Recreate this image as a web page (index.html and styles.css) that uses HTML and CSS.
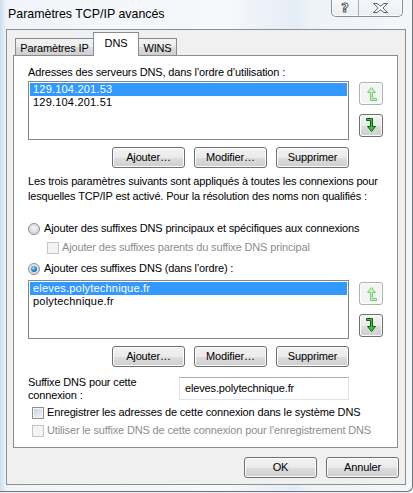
FILE: index.html
```html
<!DOCTYPE html>
<html lang="fr">
<head>
<meta charset="utf-8">
<title>Paramètres TCP/IP avancés</title>
<link rel="stylesheet" href="styles.css">
</head>
<body>
<div class="frame">
  <div class="titlebar">
    <span class="title">Paramètres TCP/IP avancés</span>
    <div class="caption-btns">
      <div class="cbtn help"><span class="qmark">?</span></div>
      <div class="cbtn close">
        <svg width="15" height="10" viewBox="0 0 15 10"><path d="M0.5 0.5 H4 L7.5 3.2 L11 0.5 H14.5 L9.8 5 L14.5 9.5 H11 L7.5 6.8 L4 9.5 H0.5 L5.2 5 Z" fill="#fff" stroke="#5c5c5c" stroke-width="1" stroke-linejoin="round"/></svg>
      </div>
    </div>
  </div>
  <div class="client">
    <div class="tabs">
      <div class="tab t1">Paramètres IP</div>
      <div class="tab t2 active">DNS</div>
      <div class="tab t3">WINS</div>
    </div>
    <div class="panel">
      <div class="lbl first">Adresses des serveurs DNS, dans l’ordre d’utilisation :</div>
      <div class="listrow">
        <div class="listbox">
          <div class="item sel">129.104.201.53</div>
          <div class="item">129.104.201.51</div>
        </div>
        <div class="arrows">
          <div class="abtn disabled">
            <svg width="11" height="15" viewBox="0 0 11 15"><path d="M0.5 0.5 H6.5 V8.5 H9.5 L5.5 13.5 L1.5 8.5 H4.5 V2.5 H0.5 Z" transform="rotate(180 5.5 7.5)" fill="#c4f0c4" stroke="#76cf76" stroke-width="1" stroke-linejoin="round"/></svg>
          </div>
          <div class="abtn">
            <svg width="11" height="15" viewBox="0 0 11 15"><path d="M0.5 0.5 H6.5 V8.5 H9.5 L5.5 13.5 L1.5 8.5 H4.5 V2.5 H0.5 Z" fill="#33cc33" stroke="#145c14" stroke-width="1" stroke-linejoin="round"/></svg>
          </div>
        </div>
      </div>
      <div class="btnrow">
        <div class="btn">Ajouter…</div>
        <div class="btn">Modifier…</div>
        <div class="btn">Supprimer</div>
      </div>
      <p class="para">Les trois paramètres suivants sont appliqués à toutes les connexions pour lesquelles TCP/IP est activé. Pour la résolution des noms non qualifiés :</p>
      <div class="opt r1"><span class="radio"></span><span>Ajouter des suffixes DNS principaux et spécifiques aux connexions</span></div>
      <div class="opt c1 dis"><span class="check disabled"></span><span>Ajouter des suffixes parents du suffixe DNS principal</span></div>
      <div class="opt r2"><span class="radio on"></span><span>Ajouter ces suffixes DNS (dans l’ordre) :</span></div>
      <div class="listrow l2">
        <div class="listbox">
          <div class="item sel">eleves.polytechnique.fr</div>
          <div class="item">polytechnique.fr</div>
        </div>
        <div class="arrows">
          <div class="abtn disabled">
            <svg width="11" height="15" viewBox="0 0 11 15"><path d="M0.5 0.5 H6.5 V8.5 H9.5 L5.5 13.5 L1.5 8.5 H4.5 V2.5 H0.5 Z" transform="rotate(180 5.5 7.5)" fill="#c4f0c4" stroke="#76cf76" stroke-width="1" stroke-linejoin="round"/></svg>
          </div>
          <div class="abtn">
            <svg width="11" height="15" viewBox="0 0 11 15"><path d="M0.5 0.5 H6.5 V8.5 H9.5 L5.5 13.5 L1.5 8.5 H4.5 V2.5 H0.5 Z" fill="#33cc33" stroke="#145c14" stroke-width="1" stroke-linejoin="round"/></svg>
          </div>
        </div>
      </div>
      <div class="btnrow">
        <div class="btn">Ajouter…</div>
        <div class="btn">Modifier…</div>
        <div class="btn">Supprimer</div>
      </div>
      <div class="suffix">
        <div class="slbl">Suffixe DNS pour cette connexion :</div>
        <div class="input">eleves.polytechnique.fr</div>
      </div>
      <div class="opt c2"><span class="check"></span><span>Enregistrer les adresses de cette connexion dans le système DNS</span></div>
      <div class="opt c3 dis"><span class="check disabled"></span><span>Utiliser le suffixe DNS de cette connexion pour l’enregistrement DNS</span></div>
    </div>
    <div class="dlgbtns">
      <div class="btn">OK</div>
      <div class="btn">Annuler</div>
    </div>
  </div>
</div>
</body>
</html>
```
FILE: styles.css
```css
* { box-sizing: border-box; }
html, body {
  margin: 0;
  padding: 0;
  width: 413px;
  height: 493px;
  overflow: hidden;
  background: #eef2f6;
  font-family: "Liberation Sans", Arial, sans-serif;
  font-size: 11px;
  letter-spacing: -0.15px;
  color: #000;
}
.frame {
  width: 413px;
  height: 492px;
  border-right: 1px solid #6f7479;
  border-bottom: 1px solid #6f7479;
  border-bottom-right-radius: 6px;
  background:
    linear-gradient(to right, rgba(190,212,236,0.7) 0px, rgba(235,242,249,0.4) 6px, rgba(255,255,255,0) 10px),
    linear-gradient(to right, #f1f4f8 0%, #f6f8fb 55%, #e4ecf5 72%, #eef3f8 75%, #f4f7fa 100%);
}
.titlebar {
  height: 29px;
  display: flex;
  align-items: flex-start;
  justify-content: space-between;
}
.title {
  padding-left: 8px;
  line-height: 28px;
  font-size: 12.4px;
  letter-spacing: 0;
  color: #000;
}
.caption-btns {
  display: flex;
  margin-top: -1px;
  margin-right: 9px;
  height: 18px;
  border: 1px solid #8a8e93;
  border-top: none;
  border-radius: 0 0 5px 5px;
  background: linear-gradient(#f7f9fb, #e9eef3);
  box-shadow: inset 0 0 0 1px rgba(255,255,255,0.8);
}
.cbtn {
  display: flex;
  align-items: center;
  justify-content: center;
}
.help {
  width: 27px;
  border-right: 1px solid #a9adb2;
}
.qmark {
  font-family: "DejaVu Sans", sans-serif;
  font-size: 13px;
  font-weight: bold;
  color: #fff;
  -webkit-text-stroke: 1px #5c5c5c;
  line-height: 13px;
}
.close {
  width: 43px;
}
.client {
  margin-left: 6px;
  width: 400px;
  height: 456px;
  border: 1px solid #8b8f94;
  background: #f0f0f0;
  padding: 2px 6px 0 6px;
}
.tabs {
  display: flex;
  align-items: flex-end;
  height: 23px;
  padding-left: 2px;
  position: relative;
  z-index: 1;
}
.tab {
  height: 17px;
  border: 1px solid #898c95;
  border-bottom: none;
  background: linear-gradient(#f3f3f3, #ebebeb 50%, #dddddd 51%, #cfcfcf);
  display: flex;
  align-items: center;
  justify-content: center;
  padding-top: 1px;
}
.t1 { width: 79px; }
.t2 { width: 46px; margin-left: -1px; }
.t3 { width: 39px; margin-left: -1px; }
.tab.active {
  height: 24px;
  margin-bottom: -1px;
  background: #fff;
  align-items: flex-start;
  padding-top: 4px;
}
.panel {
  width: 385px;
  height: 393px;
  border: 1px solid #898c95;
  background: #fff;
  padding: 0 0 0 14px;
}
.lbl {
  line-height: 13px;
}
.lbl.first { margin-top: 10px; }
.listrow {
  display: flex;
  margin-top: 2px;
}
.listbox {
  width: 321px;
  height: 59px;
  border: 1px solid #828790;
  background: #fff;
  padding: 1px;
}
.item {
  height: 13px;
  line-height: 13px;
  padding-left: 3px;
  letter-spacing: 0.2px;
}
.item.sel {
  background: #3399ff;
  color: #fff;
}
.arrows {
  margin-left: 10px;
  padding-top: 1px;
  display: flex;
  flex-direction: column;
  gap: 9px;
}
.abtn {
  width: 24px;
  height: 23px;
  border: 1px solid #707070;
  border-radius: 3px;
  background: linear-gradient(#f2f2f2, #ebebeb 50%, #dddddd 51%, #cfcfcf);
  box-shadow: inset 0 0 0 1px #fcfcfc;
  display: flex;
  align-items: center;
  justify-content: center;
}
.abtn.disabled {
  border-color: #adb2b5;
  background: #f4f4f4;
}
.btnrow {
  width: 321px;
  margin-top: 7px;
  display: flex;
  justify-content: flex-end;
  gap: 9px;
}
.btn {
  width: 73px;
  height: 21px;
  border: 1px solid #707070;
  border-radius: 3px;
  background: linear-gradient(#f2f2f2, #ebebeb 50%, #dddddd 51%, #cfcfcf);
  box-shadow: inset 0 0 0 1px #fcfcfc;
  display: flex;
  align-items: center;
  justify-content: center;
  line-height: 13px;
}
.para {
  margin: 6px 0 0 0;
  line-height: 15px;
  width: 368px;
}
.opt {
  display: flex;
  align-items: center;
  height: 15px;
  line-height: 15px;
  white-space: nowrap;
}
.opt.r1 { margin-top: 17px; }
.opt.c1 { margin-top: 4px; padding-left: 19px; }
.opt.r2 { margin-top: 6px; }
.opt.dis { color: #8d8d8d; }
.radio {
  width: 12px;
  height: 12px;
  border-radius: 50%;
  border: 1px solid #8e8f8f;
  background: radial-gradient(circle at 50% 40%, #f4f4f4 0%, #dcdcdc 60%, #c9c9c9 100%);
  margin-right: 4px;
  flex: none;
  position: relative;
}
.radio.on::after {
  content: "";
  position: absolute;
  left: 2px;
  top: 2px;
  width: 6px;
  height: 6px;
  border-radius: 50%;
  background: radial-gradient(circle at 40% 35%, #9fe0ff 0%, #1d7fc9 55%, #0a4a86 100%);
}
.check {
  width: 12px;
  height: 12px;
  border: 1px solid #8e8f8f;
  background: linear-gradient(135deg, #cbcfd5, #f6f6f6);
  box-shadow: inset 0 0 0 1px #f4f4f4;
  margin-right: 3px;
  flex: none;
}
.check.disabled {
  border-color: #c4c4c4;
  background: #f4f4f4;
  box-shadow: none;
}
.listrow.l2 { margin-top: 4px; }
.listrow.l2 .arrows { padding-top: 2px; }
.suffix {
  display: flex;
  margin-top: 9px;
}
.slbl {
  width: 151px;
  line-height: 13px;
}
.input {
  width: 170px;
  height: 23px;
  margin-top: 1px;
  border: 1px solid #e2e3ea;
  border-top-color: #abadb3;
  background: #fff;
  padding-left: 5px;
  line-height: 20px;
}
.opt.c2 { margin-top: 3px; padding-left: 4px; }
.opt.c3 { margin-top: 3px; padding-left: 4px; }
.dlgbtns {
  display: flex;
  justify-content: flex-end;
  gap: 9px;
  margin-top: 9px;
}
```
